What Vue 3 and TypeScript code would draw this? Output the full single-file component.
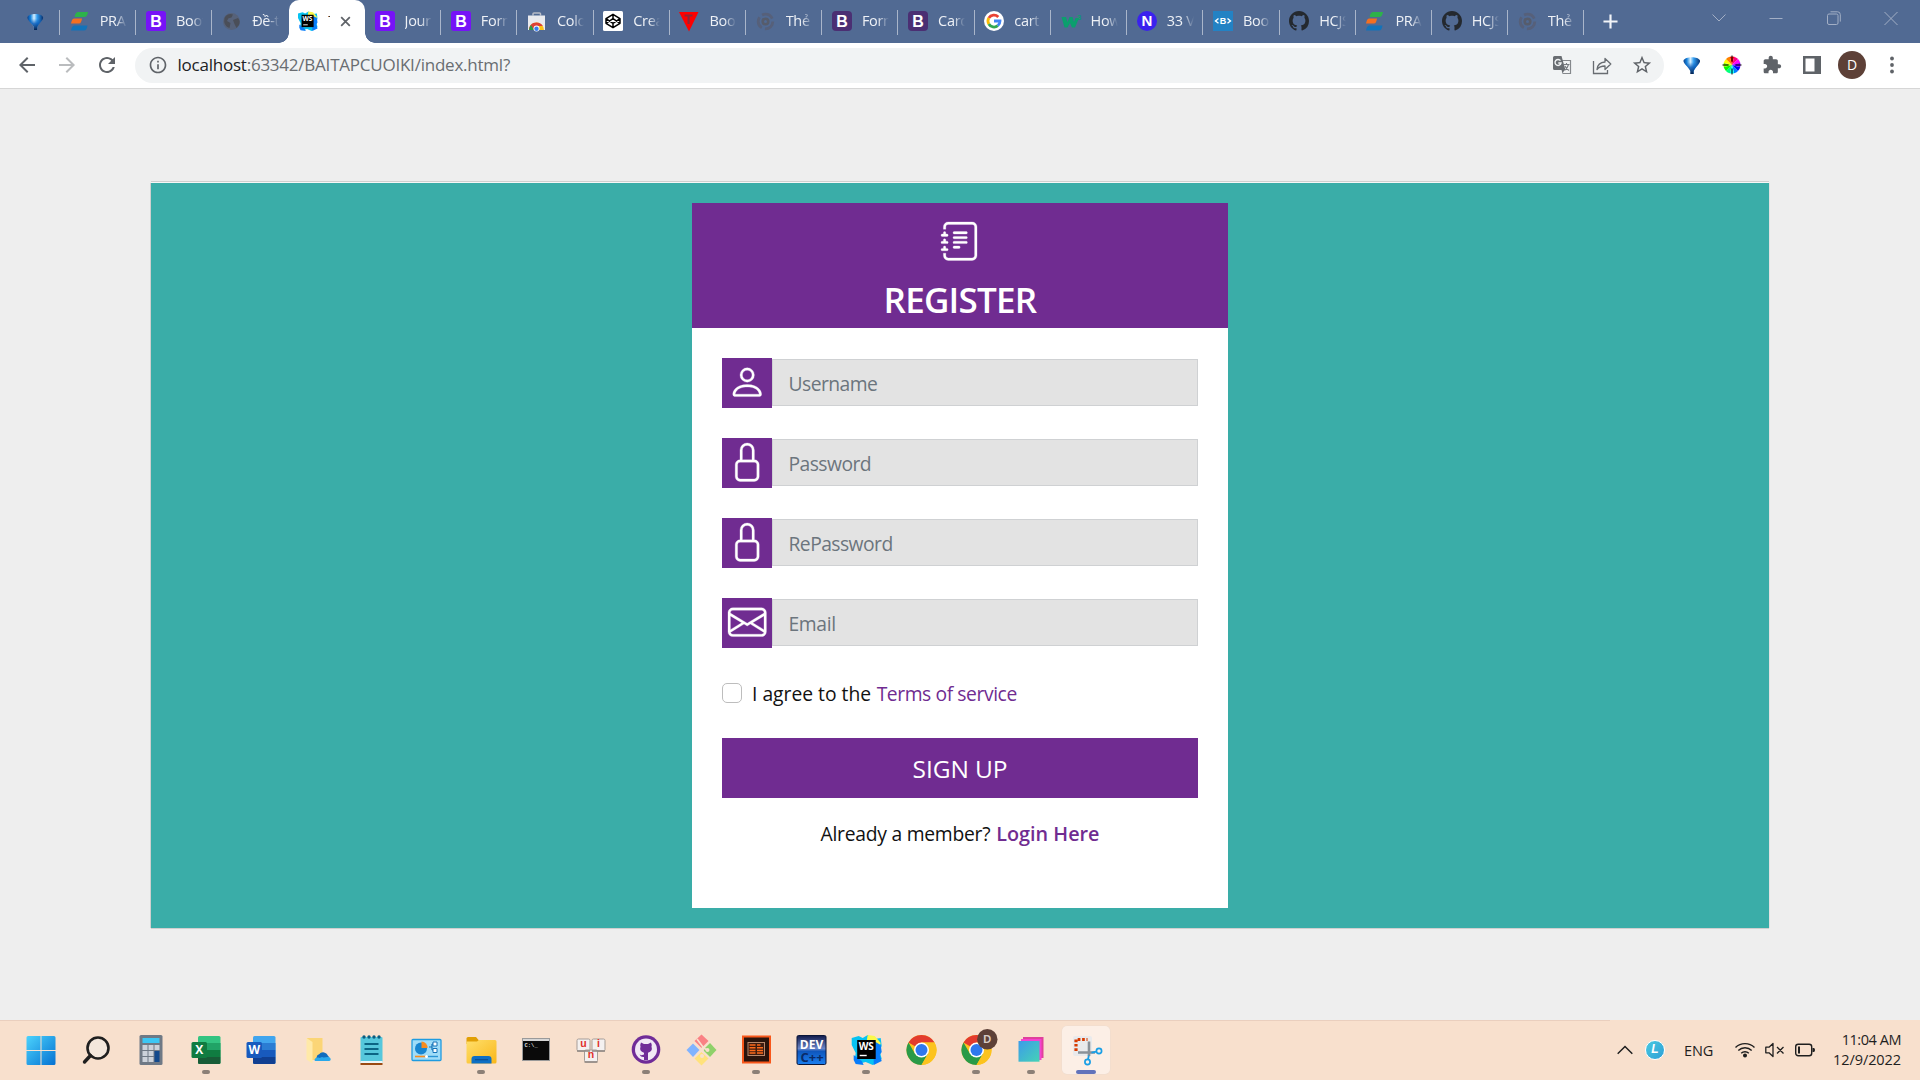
<script setup lang="ts">
interface Tab { icon: string; label: string; active?: boolean }
interface App { icon: string; open?: boolean; active?: boolean }
interface Field { icon: string; label: string; type: string; spacing: string }

const githubPath =
  'M8 0C3.58 0 0 3.58 0 8c0 3.54 2.29 6.53 5.47 7.59.4.07.55-.17.55-.38 0-.19-.01-.82-.01-1.49-2.01.37-2.53-.49-2.69-.94-.09-.23-.48-.94-.82-1.13-.28-.15-.68-.52-.01-.53.63-.01 1.08.58 1.23.82.72 1.21 1.87.87 2.33.66.07-.52.28-.87.51-1.07-1.78-.2-3.64-.89-3.64-3.95 0-.87.31-1.59.82-2.15-.08-.2-.36-1.02.08-2.12 0 0 .67-.21 2.2.82.64-.18 1.32-.27 2-.27s1.36.09 2 .27c1.53-1.04 2.2-.82 2.2-.82.44 1.1.16 1.92.08 2.12.51.56.82 1.27.82 2.15 0 3.07-1.87 3.75-3.65 3.95.29.25.54.73.54 1.48 0 1.07-.01 1.93-.01 2.2 0 .21.15.46.55.38A8.01 8.01 0 0 0 16 8c0-4.42-3.58-8-8-8'

const bold = 'font-family="Liberation Sans" font-weight="700" text-anchor="middle"'
const boldSans = 'font-family="Open Sans" font-weight="700" text-anchor="middle"'

const webstorm = `<path d="M0 3 7 1l4 2 5-3 7 4 6-1 1 8-2 5 2 8-7 5-2 1-7-3-8 2-3-5 1-6-4-8z" fill="#07c3f2"/><path d="m16 0 7 1 6 7-3 8-12-4z" fill="#fcf84a"/><path d="M22 6l7 4 1 7-2 3 2 6-8 4z" fill="#087cfa"/><path d="M2 20l8 6 2 4-8-1-2-4z" fill="#087cfa"/><rect x="5.500" y="5" width="18.500" height="19" fill="#000"/><text x="14.600" y="15" font-size="10" fill="#fff" ${boldSans}>WS</text><path d="M8 20.500h7" stroke="#fff" stroke-width="1.400"/>`

const chrome = `<circle cx="18.500" cy="18" r="15" fill="#fcc31e"/><path d="M18.500 18 5.500 10.500A15 15 0 0 1 31.500 10.500H18.500z" fill="#e33b2e"/><path d="M18.500 18 12 21.700 5.500 10.500a15 15 0 0 0 13 22.500l6.500-11.200z" fill="#2a9a48"/><path d="M18.500 10.500h13A15 15 0 0 1 18.500 33L25 21.800z" fill="#fcc31e"/><circle cx="18.500" cy="18" r="7.500" fill="#fff"/><circle cx="18.500" cy="18" r="6" fill="#2f78ee"/>`

const office = (c: string[], letter: string) =>
  `<rect x="10" y="4" width="22.500" height="28" rx="1.500" fill="${c[0]}"/><path d="M10 11h22.500v7H10z" fill="${c[1]}"/><path d="M10 18h22.500v7H10z" fill="${c[2]}"/><path d="M10 25h22.500v5.500a1.500 1.500 0 0 1-1.500 1.500H11.500a1.500 1.500 0 0 1-1.500-1.500z" fill="${c[3]}"/><rect x="3.500" y="10" width="15.500" height="16" rx="1.500" fill="${c[4]}"/><text x="11.200" y="22.300" font-size="12" fill="#fff" ${boldSans}>${letter}</text>`

const balloon = (id: string) =>
  `<defs><linearGradient id="${id}" x1="0" y1="0" x2="1" y2="0"><stop offset="0" stop-color="#0a3f8a"/><stop offset=".2" stop-color="#1683dc"/><stop offset=".42" stop-color="#d8f1ff"/><stop offset=".62" stop-color="#2f9bf0"/><stop offset="1" stop-color="#072f6c"/></linearGradient><linearGradient id="${id}s" x1="0" y1="0" x2="0" y2="1"><stop offset=".3" stop-color="#0a5cb8" stop-opacity="0"/><stop offset=".6" stop-color="#0a5cb8" stop-opacity=".85"/><stop offset="1" stop-color="#05224e"/></linearGradient></defs><g><path d="M1.500 5.500C3 1 16.500 1 18 5.500c.6 3-4.500 6-6.300 10.500v3H8.300v-3C6.500 11.500 1 8.500 1.500 5.500z" fill="url(#${id})"/><path d="M1.500 5.500C3 1 16.500 1 18 5.500c.6 3-4.500 6-6.300 10.500v3H8.300v-3C6.500 11.500 1 8.500 1.500 5.500z" fill="url(#${id}s)"/></g>`

// 20 × 20 glyphs shown in the tab strip
const favicons: Record<string, string> = {
  pra: '<path d="M7.500 1h10.500c-.5 3-1.500 5-4 5H4.500c.5-2.500 1.200-4.500 3-5z" fill="#2db24a"/><path d="M4 7.500h8c-.5 3-1.300 5-3 5H1c.5-2.500 1.300-5 3-5z" fill="#f36f21"/><path d="M4 14.500h13.500c-.5 3-1.500 5-3.500 5H1c.5-2.500 1.200-4.500 3-5z" fill="#1273ba"/>',
  boot5: `<rect width="20" height="20" rx="3" fill="#7613f7"/><text x="10" y="15.600" font-size="16" fill="#fff" ${bold}>B</text>`,
  boot4: `<rect width="20" height="20" rx="4" fill="#4b2f73"/><text x="10" y="15.600" font-size="16" fill="#fff" ${bold}>B</text>`,
  globe: '<circle cx="9.500" cy="10.500" r="8.500" fill="#56627a"/><path d="M2.500 7C4 3.500 8 2 11 3.500l-1.500 3-3 .8-1.500 2.700 3.500 2-1 5c-3-1-5.500-4-5.300-7zM11 9l5-2c2 2 2 5 1 7l-2.500 3-2-4z" fill="#4a4e58"/>',
  ws: `<g transform="translate(0 .5) scale(.65)">${webstorm}</g>`,
  store: '<path d="M6 4.500V2.800Q6 2 7 2h5.500q1 0 1 .8v1.700" fill="none" stroke="#b8bdc7" stroke-width="1.500"/><path d="M1 4.500h17v14.500H1z" fill="#e9eaee"/><path d="M2 19a7.500 7.500 0 0 1 15 0z" fill="#fbc116"/><path d="M2 19c0-4 2.500-7.500 7.500-7.500 3 0 5 1.500 6.300 3.500H10l-4 4z" fill="#dd4035"/><path d="M2 19a8 8 0 0 1 2-5l3 5z" fill="#2a9b49"/><circle cx="9.500" cy="17.500" r="3" fill="#fff"/><circle cx="9.500" cy="17.700" r="2.200" fill="#3b7ded"/>',
  codepen: '<rect width="20" height="20" rx="1.500" fill="#fff"/><path d="M10 3.300 17 7.700v4.600l-7 4.400-7-4.400V7.700zM10 3.300v4.400M10 12.300v4.400M3 7.700l7 4.600 7-4.600M3 12.300l7-4.600 7 4.600" fill="none" stroke="#000" stroke-width="1.500" stroke-linejoin="round"/>',
  tri: '<path d="M0 1h19.500L10 20.500z" fill="#f00"/><path d="M5.500 4.500h8M9.600 4.500v8.500" stroke="#8d2636" stroke-width="2.200"/>',
  ring: '<circle cx="9.500" cy="10.500" r="7.300" fill="none" stroke="#56607a" stroke-width="2.800" stroke-dasharray="12 3.300"/><circle cx="9.500" cy="10.500" r="2.800" fill="none" stroke="#565c6c" stroke-width="2.600"/>',
  google: '<circle cx="10" cy="10" r="10" fill="#fff"/><g fill="none" stroke-width="2.800"><path d="M14.300 6A6 6 0 0 0 4.800 7" stroke="#ea4335"/><path d="M4.800 7a6 6 0 0 0 0 6" stroke="#fbbc05"/><path d="M4.800 13a6 6 0 0 0 9 1.700" stroke="#34a853"/><path d="M13.800 14.700A6 6 0 0 0 16 10h-6" stroke="#4285f4"/></g>',
  w3: `<path d="M.5 6h4.500l1.500 5 2-5h3l1.500 5 1.500-4h3.500L14 16.500h-3L9 12l-2.500 4.500h-3z" fill="#0b9f6e"/><text x="18" y="8.500" font-size="8" fill="#0b9f6e" ${bold}>3</text>`,
  n: `<circle cx="10" cy="10" r="10" fill="#3a22ee"/><text x="10" y="15.300" font-size="15" fill="#fff" ${bold}>N</text>`,
  bb: `<rect width="20" height="20" fill="#2382c4"/><text x="10" y="13" font-size="9" fill="#fff" ${bold}>B</text><path d="M5.500 7.500 2.500 10l3 2.300M14.500 7.500l3 2.500-3 2.300" fill="none" stroke="#fff" stroke-width="1.400"/>`,
  github: `<path transform="scale(1.250)" d="${githubPath}" fill="#24292f"/>`
}

const tabs: Tab[] = [
  { icon: 'pra', label: 'PRAC' }, { icon: 'boot5', label: 'Boot' }, { icon: 'globe', label: 'Đề-th' },
  { icon: 'ws', label: 'T', active: true }, { icon: 'boot5', label: 'Jour' }, { icon: 'boot5', label: 'Form' },
  { icon: 'store', label: 'Color' }, { icon: 'codepen', label: 'Crea' }, { icon: 'tri', label: 'Boot' },
  { icon: 'ring', label: 'Thẻ' }, { icon: 'boot4', label: 'Form' }, { icon: 'boot4', label: 'Card' },
  { icon: 'google', label: 'cart' }, { icon: 'w3', label: 'How' }, { icon: 'n', label: '33 V' },
  { icon: 'bb', label: 'Boot' }, { icon: 'github', label: 'HCJS' }, { icon: 'pra', label: 'PRAC' },
  { icon: 'github', label: 'HCJS' }, { icon: 'ring', label: 'Thẻ' }
]

const wheel = Array.from({ length: 12 }, (_, i) => {
  const p = (a: number) => `${(12 + 8.5 * Math.cos(a)).toFixed(2)} ${(12 + 8.5 * Math.sin(a)).toFixed(2)}`
  const a = ((i * 30 - 105) * Math.PI) / 180
  return `<path d="M12 12 L${p(a)} A8.500 8.500 0 0 1 ${p(a + 0.54)}z" fill="hsl(${(360 - i * 30) % 360} 100% 50%)"/>`
}).join('')

// 36 × 36 glyphs shown in the taskbar
const appIcons: Record<string, string> = {
  start: '<defs><linearGradient id="wn" x1="0" y1="0" x2="1" y2="1"><stop offset="0" stop-color="#4cd3fc"/><stop offset="1" stop-color="#0471d2"/></linearGradient></defs><path d="M3.500 5.500a1.500 1.500 0 0 1 1.500-1.500h12.500v14H3.500zM18.500 4h12.500a1.500 1.500 0 0 1 1.500 1.500V18h-14zM3.500 19h14v14H5a1.500 1.500 0 0 1-1.500-1.500zM18.500 19h14v12.500a1.500 1.500 0 0 1-1.500 1.500H18.500z" fill="url(#wn)"/>',
  search: '<circle cx="20" cy="16" r="10.500" fill="#f3e7dc" stroke="#1f1f1f" stroke-width="2.600"/><path d="m12.500 23.500-6 6.500" stroke="#1f1f1f" stroke-width="3.400" stroke-linecap="round"/>',
  calc: '<rect x="6.500" y="3" width="23" height="30" rx="1.500" fill="#6f7985"/><rect x="9.500" y="6" width="17" height="5" fill="#3cc7f4"/><g fill="#ccd2da"><path d="M9.500 13h5v5h-5zM15.500 13h5v5h-5zM21.500 13h5v5h-5zM9.500 19h5v5h-5zM15.500 19h5v5h-5zM9.500 25h5v5h-5zM15.500 25h5v5h-5z"/></g><path d="M21.500 19h5v11h-5z" fill="#12498c"/>',
  excel: office(['#33c481', '#21a366', '#107c41', '#185c37', '#107c41'], 'X'),
  word: office(['#41a5ee', '#2b7cd3', '#185abd', '#103f91', '#185abd'], 'W'),
  folder1: '<path d="M9 6h15.500v22H13z" fill="#fbd576"/><path d="m8.500 6 6 4v21.500l-6-4z" fill="#ffe9a8"/><path d="M18.500 25.500a4 4 0 0 1 3-3.600 5 5 0 0 1 8.300 1.600A3.500 3.500 0 0 1 30 29H19.500a3.500 3.500 0 0 1-1-3.500z" fill="#0f6cbd"/><path d="M16.500 28c0-2 3-3 5-2l2.500-1c2 1.500 7-1.500 8.500 1.500.8 2-1 2.500-2 2.500H18c-1 0-1.500-.5-1.500-1z" fill="#28a8ea"/>',
  notepad: '<rect x="7.500" y="5" width="22" height="26" rx="1" fill="#56c7dc"/><path d="M7.500 29h22v2h-22z" fill="#eef6f8"/><path d="M7.500 31h22v2h-22z" fill="#9a4a12"/><g fill="#0b5d80"><circle cx="11" cy="5" r="1.700"/><circle cx="16" cy="5" r="1.700"/><circle cx="21" cy="5" r="1.700"/><circle cx="26" cy="5" r="1.700"/></g><path d="M11.500 12h14M11.500 17h14M11.500 22h14" stroke="#0b6484" stroke-width="2"/>',
  panel: '<rect x="4" y="7.500" width="29" height="21" rx="1" fill="#9fdcf8" stroke="#1f9be0" stroke-width="1.300"/><circle cx="13" cy="16.500" r="6" fill="#1785d0"/><path d="M13.500 16V9.500a6 6 0 0 1 6 6.500z" fill="#f78c1e"/><path d="M21 15h3M24 12v6M24 12h3M24 18h3" stroke="#1573b8" stroke-width="1.200"/><path d="M25 10h4v4h-4zM25 16.500h4v4h-4z" fill="#fff" stroke="#1573b8" stroke-width="1"/><path d="M7 24.500h11" stroke="#f78c1e" stroke-width="1.600"/><path d="M18 24.500h12" stroke="#2a94d4" stroke-width="1.400"/><circle cx="18.500" cy="24.500" r="1.500" fill="#fff"/>',
  explorer: '<defs><linearGradient id="fx" x1="0" y1="0" x2="1" y2="1"><stop offset="0" stop-color="#ffdf6b"/><stop offset="1" stop-color="#f9b71a"/></linearGradient></defs><path d="M3.500 6.500A1.500 1.500 0 0 1 5 5h8l3 3.500V12H3.500z" fill="#e19f05"/><path d="M3.500 9.500H14l2-1.500h16a1.500 1.500 0 0 1 1.500 1.500V30a1.500 1.500 0 0 1-1.500 1.500H5A1.500 1.500 0 0 1 3.500 30z" fill="url(#fx)"/><path d="M8.500 31.500V27a3 3 0 0 1 3-3h14a3 3 0 0 1 3 3v4.500z" fill="#0e6fc4"/><path d="M12 27.700h13" stroke="#0b4f94" stroke-width="1.200"/>',
  cmd: '<rect x="4.500" y="6.500" width="27" height="22" fill="#0a0a0a" stroke="#9a9a9a"/><path d="M5 7h26v2H5z" fill="#d5d5d5"/><text x="6.500" y="14.500" font-size="5.500" fill="#ddd" font-family="Liberation Mono" font-weight="700">C:\\_</text>',
  unikey: `<g fill="#f4f1f0" stroke="#a59d98"><rect x="4" y="7" width="13" height="12" rx="1.500"/><rect x="19" y="7" width="13" height="12" rx="1.500"/><rect x="11.500" y="18" width="13" height="12" rx="1.500"/></g><path d="M4 19h13M19 19h13M11.500 30h13" stroke="#8d8580" stroke-width="1.500"/><g font-size="10.500" fill="#e0302c" ${bold}><text x="10.500" y="15">u</text><text x="25.500" y="15">i</text><text x="18" y="26">n</text></g>`,
  ghdesk: `<circle cx="18" cy="17.500" r="14.300" fill="#702c98"/><circle cx="18" cy="17.500" r="11" fill="#f1e8f5"/><path transform="translate(8.400 7.900) scale(1.200)" d="${githubPath}" fill="#f1e8f5"/><path d="M13 10.500l3 1.500h4l3-1.500q1 2 .5 4 1.500 5-3.500 6.200v7.300h-4v-3q-3 .5-4.500-2.500l2 .8 2.500-.8v-1.800q-5-1.200-3.500-6.200-.5-2 .5-4z" fill="#702c98"/>`,
  git: '<path d="m18.500 2.500 7 6.500-7 7-7-7z" fill="#fa8184"/><path d="m10 11.500 6.500 6.500-6.500 7-6.500-7z" fill="#80b3ff"/><path d="m27 11 6.500 7-6.500 7-7-7z" fill="#8fd16a"/><path d="m18.500 20 7 6.500-7 7-7-7z" fill="#ffe27c"/><path d="m14 7 6 8v6M19 15l5 3" stroke="#f8e0cd" stroke-width="1.700" fill="none"/><circle cx="24.500" cy="18" r="2" fill="#f8e0cd"/><circle cx="19" cy="24" r="2" fill="#f8e0cd"/>',
  reader: '<rect x="5" y="4.500" width="27" height="26" fill="#2a140c" stroke="#f8571a" stroke-width="2"/><rect x="10" y="10.500" width="16.500" height="13" fill="#3d1c10" stroke="#b8886b"/><g stroke="#ff6a1a" stroke-width="1.500"><path d="M11.500 13h6M11.500 15.700h6M11.500 18.400h6M11.500 21h6M19 13h3.500M19 15.700h6M19 18.400h6M19 21h6"/></g>',
  dev: `<defs><linearGradient id="dv" x1="0" y1="0" x2="0" y2="1"><stop offset="0" stop-color="#10194a"/><stop offset=".45" stop-color="#6a86c8"/><stop offset=".55" stop-color="#0f57bd"/><stop offset="1" stop-color="#1b7ff0"/></linearGradient></defs><rect x="4" y="3.500" width="29" height="29" rx="1.500" fill="url(#dv)" stroke="#0a1538"/><text x="18.500" y="16.500" font-size="12" fill="#fff" ${boldSans}>DEV</text><text x="19" y="30" font-size="13" fill="#0a2a66" ${boldSans}>C++</text>`,
  webstorm: `<g transform="translate(3.700 3)">${webstorm}</g>`,
  chrome,
  chromeD: `${chrome}<circle cx="29.300" cy="7.300" r="10.200" fill="#5d4037"/><text x="29.300" y="11.300" font-size="11" fill="#d8cbc5" ${bold}>D</text>`,
  stack: '<defs><linearGradient id="sk" x1="0" y1="0" x2="1" y2="1"><stop offset="0" stop-color="#3c9bea"/><stop offset="1" stop-color="#45d3b6"/></linearGradient></defs><rect x="10" y="5" width="20.500" height="21" fill="#e0409c"/><rect x="8" y="7" width="20.500" height="21" fill="#f542d0"/><rect x="5.500" y="9" width="21" height="20.700" fill="url(#sk)"/>',
  snip: '<rect x="5" y="4" width="19" height="20" rx="2" fill="#e9eaec"/><path d="M8 19V7.500h11.500" fill="none" stroke="#d83b01" stroke-width="3.200" stroke-dasharray="2.700 1.700"/><path d="M21 9.500V24M10 20.500h17" stroke="#8a9198" stroke-width="2.600"/><circle cx="31" cy="19" r="2.600" fill="none" stroke="#1a9fe6" stroke-width="1.700"/><circle cx="19.500" cy="30" r="2.600" fill="none" stroke="#1a9fe6" stroke-width="1.700"/><path d="m28.500 19.700-5 1M20 27.500l.8-4" stroke="#1a9fe6" stroke-width="1.800"/>'
}

const apps: App[] = [
  { icon: 'start' }, { icon: 'search' }, { icon: 'calc' }, { icon: 'excel', open: true }, { icon: 'word' },
  { icon: 'folder1' }, { icon: 'notepad' }, { icon: 'panel' }, { icon: 'explorer', open: true }, { icon: 'cmd' },
  { icon: 'unikey' }, { icon: 'ghdesk', open: true }, { icon: 'git' }, { icon: 'reader', open: true }, { icon: 'dev' },
  { icon: 'webstorm', open: true }, { icon: 'chrome' }, { icon: 'chromeD', open: true }, { icon: 'stack', open: true },
  { icon: 'snip', open: true, active: true }
]

const lock =
  'M8 1a2 2 0 0 1 2 2v4H6V3a2 2 0 0 1 2-2m3 6V3a3 3 0 0 0-6 0v4a2 2 0 0 0-2 2v5a2 2 0 0 0 2 2h6a2 2 0 0 0 2-2V9a2 2 0 0 0-2-2M5 8h6a1 1 0 0 1 1 1v5a1 1 0 0 1-1 1H5a1 1 0 0 1-1-1V9a1 1 0 0 1 1-1'

const fields: Field[] = [
  {
    icon: 'M8 8a3 3 0 1 0 0-6 3 3 0 0 0 0 6m2-3a2 2 0 1 1-4 0 2 2 0 0 1 4 0m4 8c0 1-1 1-1 1H3s-1 0-1-1 1-4 6-4 6 3 6 4m-1-.004c-.001-.246-.154-.986-.832-1.664C11.516 10.680 10.289 10 8 10s-3.516.680-4.168 1.332c-.678.678-.830 1.418-.832 1.664z',
    label: 'Username', type: 'text', spacing: 'tight'
  },
  { icon: lock, label: 'Password', type: 'password', spacing: 'tight' },
  { icon: lock, label: 'RePassword', type: 'password', spacing: 'tight' },
  {
    icon: 'M0 4a2 2 0 0 1 2-2h12a2 2 0 0 1 2 2v8a2 2 0 0 1-2 2H2a2 2 0 0 1-2-2zm2-1a1 1 0 0 0-1 1v.217l7 4.200 7-4.200V4a1 1 0 0 0-1-1zm13 2.383-4.708 2.825L15 11.105zm-.034 6.876-5.640-3.471L8 9.583l-1.326-.795-5.640 3.470A1 1 0 0 0 2 13h12a1 1 0 0 0 .966-.741M1 11.105l4.708-2.897L1 5.383z',
    label: 'Email', type: 'email', spacing: 'normal'
  }
]
</script>

<template>
  <div class="screen">
    <header class="tabstrip">
      <div class="tab pinned">
        <svg class="fav" viewBox="0 0 20 20" v-html="balloon('bl1')" />
        <i class="sep" />
      </div>
      <div v-for="(t, i) in tabs" :key="i" class="tab" :class="{ active: t.active }">
        <svg class="fav" viewBox="0 0 20 20" v-html="favicons[t.icon]" />
        <span class="tab-label">{{ t.label }}</span>
        <svg v-if="t.active" class="tab-close" viewBox="0 0 12 12"><path d="m1.300 1.300 9.400 9.400m0-9.400-9.400 9.400" stroke="#5f6368" stroke-width="1.900" /></svg>
        <i v-if="!t.active && i !== 2" class="sep" />
      </div>
      <svg class="new-tab" viewBox="0 0 16 16"><path d="M8 .5v15M.5 8h15" stroke="#f2f4f8" stroke-width="2.300" /></svg>
      <div class="window-controls">
        <svg viewBox="0 0 16 16"><path d="m1.500 4.500 6.500 6.500 6.500-6.500" /></svg>
        <svg viewBox="0 0 16 16"><path d="M1.500 8.500h13" /></svg>
        <svg viewBox="0 0 16 16"><rect x="1.500" y="4" width="10.500" height="10.500" rx="1.500" /><path d="M4.500 1.800h7q2.800 0 2.800 2.800v7" /></svg>
        <svg viewBox="0 0 16 16"><path d="m1.500 2 13 13m0-13-13 13" /></svg>
      </div>
    </header>

    <nav class="toolbar">
      <span class="tool"><svg viewBox="0 0 24 24"><path fill="#5f6368" d="M20 11H7.830l5.590-5.590L12 4l-8 8 8 8 1.410-1.410L7.830 13H20v-2z" /></svg></span>
      <span class="tool"><svg viewBox="0 0 24 24"><path fill="#babcbe" d="M12 4l-1.410 1.410L16.170 11H4v2h12.170l-5.580 5.590L12 20l8-8z" /></svg></span>
      <span class="tool"><svg viewBox="0 0 24 24"><path fill="#5f6368" d="M17.650 6.350C16.200 4.900 14.210 4 12 4c-4.420 0-7.990 3.580-7.990 8s3.570 8 7.990 8c3.730 0 6.840-2.550 7.730-6h-2.080c-.820 2.330-3.040 4-5.650 4-3.310 0-6-2.690-6-6s2.690-6 6-6c1.660 0 3.140.690 4.220 1.780L13 11h7V4l-2.350 2.350z" /></svg></span>
      <div class="omnibox">
        <svg class="info" viewBox="0 0 24 24"><path fill="#5f6368" d="M11 7h2v2h-2zm0 4h2v6h-2zm1-9C6.480 2 2 6.480 2 12s4.480 10 10 10 10-4.480 10-10S17.520 2 12 2zm0 18c-4.410 0-8-3.590-8-8s3.590-8 8-8 8 3.590 8 8-3.590 8-8 8z" /></svg>
        <span class="url"><b>localhost</b>:63342/BAITAPCUOIKI/index.html?</span>
        <span class="tool">
          <svg viewBox="0 0 24 24">
            <path d="M10 7.500h10.500v13H12.500" fill="none" stroke="#85888c" stroke-width="1.200" />
            <path d="M4.500 3h7l4 14H4.500A1.500 1.500 0 0 1 3 15.500v-11A1.500 1.500 0 0 1 4.500 3z" fill="#696d72" />
            <path d="M11.500 17h3l-2 3.500z" fill="#696d72" />
            <path d="M10.500 7.700A3 3 0 1 0 11 10H8.300" fill="none" stroke="#f1f3f4" stroke-width="1.400" />
            <path d="M13.500 11.500h6M16.500 10v1.500M18.500 11.500q-1 4-4 6M15 13q1.500 3.500 4 4.500" fill="none" stroke="#777b80" stroke-width="1.100" />
          </svg>
        </span>
        <span class="tool">
          <svg viewBox="0 0 24 24" fill="none" stroke="#686c71" stroke-width="1.300"><path d="M3.500 8v12.500h14V17" /><path d="M7 16.500c.5-5 3.500-7.300 8-7.500V5.500l5.800 5.500-5.800 5.500V13c-3.500 0-6 1-8 3.500z" stroke-linejoin="round" /></svg>
        </span>
        <span class="tool"><svg class="star" viewBox="0 0 24 24"><path fill="#5f6368" d="M22 9.240l-7.190-.620L12 2 9.190 8.630 2 9.240l5.460 4.730L5.820 21 12 17.270 18.180 21l-1.630-7.030L22 9.240zM12 15.400l-3.760 2.270 1-4.280-3.320-2.880 4.380-.380L12 6.100l1.710 4.040 4.380.380-3.320 2.880 1 4.280L12 15.400z" /></svg></span>
      </div>
      <span class="tool"><svg class="balloon" viewBox="0 0 20 20" v-html="balloon('bl2')" /></span>
      <span class="tool">
        <svg viewBox="0 0 24 24"><g v-html="wheel" /><path d="M12 2.500v6M12 15.500v6M2.500 12h6M15.500 12h6" stroke="#000" stroke-width="1" /></svg>
      </span>
      <span class="tool"><svg class="puzzle" viewBox="0 0 24 24"><path fill="#5f6368" d="M20.500 11H19V7c0-1.100-.9-2-2-2h-4V3.500C13 2.120 11.880 1 10.500 1S8 2.120 8 3.500V5H4c-1.100 0-1.990.9-1.990 2v3.800H3.500c1.490 0 2.700 1.210 2.700 2.700s-1.210 2.700-2.700 2.700H2V20c0 1.100.9 2 2 2h3.800v-1.500c0-1.490 1.210-2.700 2.700-2.700 1.490 0 2.700 1.210 2.700 2.700V22H17c1.100 0 2-.9 2-2v-4h1.500c1.380 0 2.500-1.120 2.500-2.500S21.880 11 20.500 11z" /></svg></span>
      <span class="tool"><svg viewBox="0 0 24 24"><path fill="#5f6368" fill-rule="evenodd" d="M3 3h18v18H3zM5.500 5.500v13h9v-13z" /></svg></span>
      <span class="tool"><span class="avatar">D</span></span>
      <span class="tool"><svg viewBox="0 0 24 24" fill="#5f6368"><circle cx="12" cy="5.500" r="1.900" /><circle cx="12" cy="12" r="1.900" /><circle cx="12" cy="18.500" r="1.900" /></svg></span>
    </nav>

    <main class="page">
      <section class="banner">
        <form class="card" @submit.prevent>
          <div class="card-head">
            <svg class="journal" viewBox="0 0 16 16" fill="#fff">
              <path d="M5 10.500a.5.500 0 0 1 .5-.500h2a.5.500 0 0 1 0 1h-2a.5.500 0 0 1-.5-.500m0-2a.5.500 0 0 1 .5-.500h5a.5.500 0 0 1 0 1h-5a.5.500 0 0 1-.5-.500m0-2a.5.500 0 0 1 .5-.500h5a.5.500 0 0 1 0 1h-5a.5.500 0 0 1-.5-.500m0-2a.5.500 0 0 1 .5-.500h5a.5.500 0 0 1 0 1h-5a.5.500 0 0 1-.5-.500" />
              <path d="M3 0h10a2 2 0 0 1 2 2v12a2 2 0 0 1-2 2H3a2 2 0 0 1-2-2v-1h1v1a1 1 0 0 0 1 1h10a1 1 0 0 0 1-1V2a1 1 0 0 0-1-1H3a1 1 0 0 0-1 1v1H1V2a2 2 0 0 1 2-2" />
              <path d="M1 5v-.500a.5.500 0 0 1 1 0V5h.5a.5.500 0 0 1 0 1h-2a.5.500 0 0 1 0-1zm0 3v-.500a.5.500 0 0 1 1 0V8h.5a.5.500 0 0 1 0 1h-2a.5.500 0 0 1 0-1zm0 3v-.500a.5.500 0 0 1 1 0v.5h.5a.5.500 0 0 1 0 1h-2a.5.500 0 0 1 0-1z" />
            </svg>
            <h2>REGISTER</h2>
          </div>
          <div class="card-body">
            <div v-for="f in fields" :key="f.label" class="field">
              <span class="field-icon"><svg viewBox="0 0 16 16"><path fill="#fff" stroke="#fff" stroke-width=".12" :d="f.icon" /></svg></span>
              <input :type="f.type" :placeholder="f.label" :class="f.spacing" />
            </div>
            <label class="agree">
              <input type="checkbox" />
              <span>I agree to the</span>
              <a>Terms of service</a>
            </label>
            <button class="signup" type="submit">SIGN UP</button>
            <p class="member"><span>Already a member?</span><a>Login Here</a></p>
          </div>
        </form>
      </section>
    </main>

    <footer class="taskbar">
      <div v-for="a in apps" :key="a.icon" class="app" :class="{ active: a.active }">
        <svg viewBox="0 0 36 36" v-html="appIcons[a.icon]" />
        <i v-if="a.open" class="dot" />
      </div>
      <div class="tray">
        <svg class="up" viewBox="0 0 16 10"><path d="m.7 8.800 7.300-7.300 7.300 7.300" fill="none" stroke="#1f1f1f" stroke-width="1.500" /></svg>
        <span class="lang-badge">L</span>
        <span class="eng">ENG</span>
        <svg class="sys" viewBox="0 0 20 20" fill="none" stroke="#1f1f1f" stroke-width="1.400"><path d="M.5 7.500a13.500 13.500 0 0 1 19 0M3.300 10.500a9.500 9.500 0 0 1 13.400 0M6.200 13.300a5.500 5.500 0 0 1 7.600 0" /><circle cx="10" cy="15.500" r="1.300" fill="#1f1f1f" /></svg>
        <svg class="sys" viewBox="0 0 20 20" fill="none" stroke="#1f1f1f" stroke-width="1.300"><path d="M.8 7.200h3.200l4-3.700v13l-4-3.700H.8zM12 7l6.500 6.500m0-6.500L12 13.500" stroke-linejoin="round" /></svg>
        <svg class="sys battery" viewBox="0 0 20 20"><rect x=".7" y="4.200" width="16" height="11.600" rx="2.500" fill="none" stroke="#1f1f1f" stroke-width="1.400" /><path d="M3 6.500h2v7H3zM17.500 8h1.200q1.300 0 1.300 2t-1.300 2h-1.200z" fill="#1f1f1f" /></svg>
        <div class="clock"><span class="time">11:04 AM</span><span class="date">12/9/2022</span></div>
      </div>
    </footer>
  </div>
</template>

<style>
body { margin: 0; overflow: hidden; }
</style>

<style scoped>
* { box-sizing: border-box; }
.screen { width: 1920px; height: 1080px; display: flex; flex-direction: column; overflow: hidden; font-family: "Open Sans", "Noto Sans", sans-serif; }
svg { display: block; flex: none; overflow: visible; }

.tabstrip { height: 43px; flex: none; display: flex; background: #516a93; }
.tab { position: relative; width: 76.230px; height: 43px; flex: none; display: flex; align-items: center; padding-left: 9.700px; }
.tab.pinned { width: 60px; padding-left: 25.500px; }
.fav { width: 20px; height: 20px; margin-top: -1px; }
.pinned .fav { width: 19px; height: 19px; }
.tab-label { width: 27px; margin: -2px 0 0 10px; overflow: hidden; white-space: nowrap; font-size: 14.500px; letter-spacing: -.3px; line-height: 22px; color: #eef1f6; -webkit-mask-image: linear-gradient(90deg, #000 58%, transparent 100%); mask-image: linear-gradient(90deg, #000 58%, transparent 100%); }
.sep { width: 1px; height: 25px; margin: 1px 0 0 auto; background: #a9b5ca; }
.tab.active { background: #fff; border-radius: 10px 10px 0 0; z-index: 1; }
.tab.active::before, .tab.active::after { content: ""; position: absolute; bottom: 0; width: 10px; height: 10px; }
.tab.active::before { left: -10px; background: radial-gradient(circle at 0 0, transparent 9.500px, #fff 10px); }
.tab.active::after { right: -10px; background: radial-gradient(circle at 100% 0, transparent 9.500px, #fff 10px); }
.active .tab-label { width: 2px; color: #333; -webkit-mask-image: none; mask-image: none; }
.tab-close { width: 11px; height: 11px; margin-left: 10px; }
.new-tab { width: 15px; height: 15px; margin: 14px 0 0 19px; }
.window-controls { display: flex; gap: 41.500px; margin: 10px 21px 0 auto; }
.window-controls svg { width: 16px; height: 16px; fill: none; stroke: #a3afc5; stroke-width: 1; }

.toolbar { height: 46px; flex: none; display: flex; align-items: center; padding: 0 8px 1px 7px; background: #fff; border-bottom: 1px solid #d6d6d6; }
.tool { width: 40px; height: 35px; flex: none; display: flex; align-items: center; justify-content: center; }
.tool svg { width: 24px; height: 24px; }
.tool svg.star { width: 22px; height: 22px; }
.tool svg.puzzle { width: 20px; height: 20px; }
.tool svg.balloon { width: 20px; height: 20px; }
.omnibox { width: 1530px; height: 35px; margin: 0 8px; border-radius: 18px; background: #f1f3f4; display: flex; align-items: center; padding: 0 2px 0 12.500px; }
.info { width: 20px; height: 20px; }
.url { margin: 0 auto 0 10px; font-size: 17px; letter-spacing: -.23px; line-height: 24px; color: #696d71; white-space: nowrap; }
.url b { font-weight: 400; color: #202124; }
.avatar { width: 28px; height: 28px; border-radius: 50%; background: #5d4037; color: #fff; font-size: 14px; line-height: 28px; text-align: center; }

.page { flex: 1; background: #eee; padding: 94px 151px 0; }
.banner { height: 745px; background: #3aada8; box-shadow: 0 -1px 0 #f7f7f7, -1px 0 0 #cfcfcf, 1px 0 0 #e2e2e2, 0 1px 0 #cfcfcf, 0 -2px 0 #cfcfcf; padding-top: 20px; display: flex; align-items: flex-start; justify-content: center; }
.card { width: 536px; height: 705px; background: #fff; }
.card-head { height: 125px; background: #702c91; display: flex; flex-direction: column; align-items: center; padding-top: 19px; }
.journal { width: 38.400px; height: 38.400px; stroke: #fff; stroke-width: .12; }
h2 { margin: 14.600px 0 0; font-size: 35px; font-weight: 600; line-height: 50px; letter-spacing: -.75px; color: #fff; }
.card-body { padding: 30px; display: flex; flex-direction: column; }
.field { display: flex; height: 50px; margin-bottom: 30px; }
.field-icon { width: 50px; height: 50px; background: #702c91; display: flex; align-items: flex-start; justify-content: center; padding-top: 4.600px; }
.field-icon svg { width: 38.400px; height: 38.400px; }
.field input { flex: 1; height: 47px; margin-top: 1px; padding: 2px 16px 0 15.500px; border: 1px solid #cfd1d3; border-radius: 0; outline: 0; background: #e3e3e3; font: 400 19.300px "Open Sans", sans-serif; }
.field input::placeholder { color: #6c757d; opacity: 1; }
.field input.tight { letter-spacing: -.55px; }
.field input.normal { letter-spacing: -.35px; }
.agree { height: 24px; margin-top: 3px; display: flex; align-items: center; font-size: 19.300px; line-height: 24px; color: #111; white-space: nowrap; }
.agree input { appearance: none; width: 20px; height: 20px; margin: 0 10px 0 0; border: 1px solid #bdbdbd; border-radius: 5px; background: #fff; }
.agree span { margin-top: 2px; }
.agree a { margin: 2px 0 0 5.500px; color: #702c91; letter-spacing: -.42px; }
.signup { height: 60px; margin-top: 33px; border: 0; padding: 0; background: #702c91; color: #fff; font: 400 24.500px "Open Sans", sans-serif; letter-spacing: -.1px; }
.member { margin: 24px 0 0; display: flex; justify-content: center; font-size: 19.300px; line-height: 24px; color: #111; letter-spacing: -.25px; white-space: nowrap; }
.member a { margin-left: 6px; color: #702c91; font-weight: 600; font-size: 19.800px; letter-spacing: 0; }

.taskbar { height: 60px; flex: none; display: flex; padding-left: 13.500px; background: linear-gradient(#eacfbe, #eacfbe) 0 0 / 1610px 1px no-repeat, #f8e0cd; }
.app { position: relative; width: 48px; height: 48px; flex: none; margin: 6px 3.500px; border-radius: 5px; display: flex; justify-content: center; padding-top: 6px; }
.app svg { width: 36px; height: 36px; }
.app.active { background: #fcefe6; box-shadow: 0 0 0 .5px #eedccf; }
.dot { position: absolute; left: 20px; bottom: 0; width: 8px; height: 4px; border-radius: 2px; background: #8c8077; }
.active .dot { left: 14px; width: 20px; background: #6273bb; }
.tray { margin-left: auto; padding-right: 19px; display: flex; align-items: center; color: #1f1f1f; }
.up { width: 16px; height: 10px; margin: -1px 12px 0 0; }
.lang-badge { width: 20px; height: 20px; margin-right: 19px; border: 1.500px solid #fff; border-radius: 50%; background: linear-gradient(135deg, #49c9e0, #2e9fd6); color: #fff; font: italic 700 12px/17px "Liberation Sans", sans-serif; text-align: center; }
.eng { width: 28px; margin: 0 23px 0 0; font-size: 14.500px; letter-spacing: -.1px; }
.sys { width: 20px; height: 20px; margin-right: 10px; }
.battery { margin-right: 14px; }
.clock { width: 72px; display: flex; flex-direction: column; align-items: flex-end; font-size: 14.500px; line-height: 20px; white-space: nowrap; }
.time { letter-spacing: -.45px; }
.date { letter-spacing: -.08px; }
</style>
